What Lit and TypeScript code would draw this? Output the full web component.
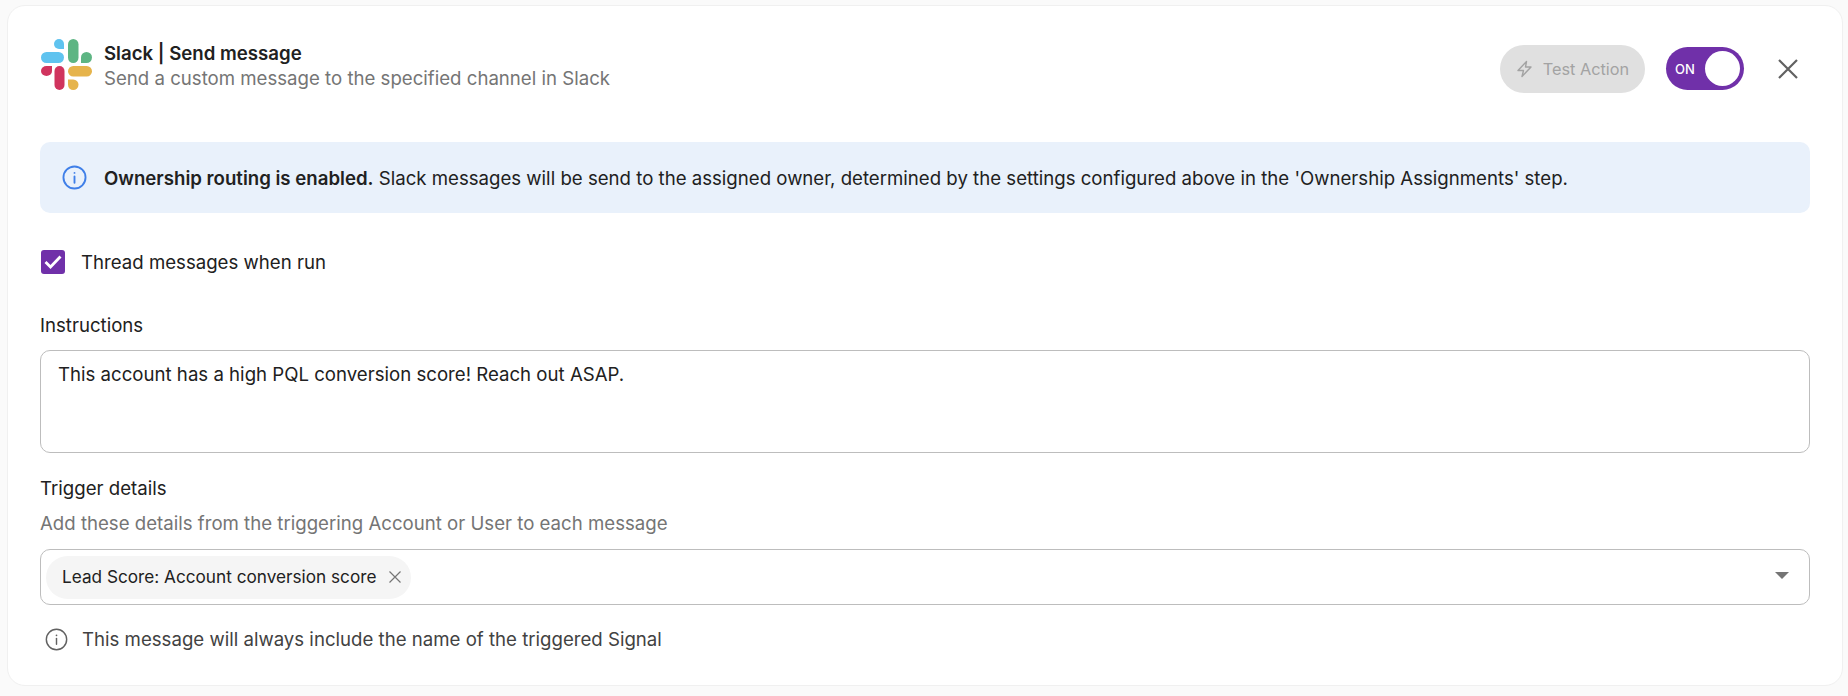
import { LitElement, html, css } from "lit";
import { customElement } from "lit/decorators.js";

@customElement("app-root")
export class AppRoot extends LitElement {
  static styles = css`
    :host { display: block; height: 696px; background: #fafafa; padding: 5px 5px 10px 7px; box-sizing: border-box; font-family: Inter, "Liberation Sans", sans-serif; font-size: 18.64px; line-height: 24px; color: #212121; }
    .card { height: 681px; box-sizing: border-box; background: #fff; border: 1px solid #f0f0f0; border-radius: 18px; padding: 33px 32px 0 32px; display: flex; flex-direction: column; }
    .head { display: flex; align-items: flex-start; height: 60px; }
    .logo { width: 51px; height: 51px; margin-left: 1px; flex: none; }
    .titles { margin-left: 12px; flex: 1; padding-top: 2px; }
    .title { font-weight: 600; line-height: 25px; color: #212121; }
    .sub { color: #757575; line-height: 25px; }
    .btn { margin-top: 6px; width: 145px; height: 48px; border-radius: 24px; background: #e0e0e0; color: #a3a3a3; display: flex; align-items: center; justify-content: center; gap: 10px; font-size: 16.3px; font-weight: 400; }
    .toggle { margin-top: 8px; width: 78px; height: 43px; margin-left: 21px; border-radius: 22px; background: #7030a9; color: #fff; display: flex; align-items: center; justify-content: space-between; box-sizing: border-box; padding: 0 4px 0 9px; font-size: 13px; font-weight: 500; }
    .knob { width: 35px; height: 35px; border-radius: 50%; background: #fff; }
    .close { margin-top: 10px; margin-left: 24px; margin-right: 2px; width: 40px; height: 40px; display: flex; align-items: center; justify-content: center; }
    .alert { margin-top: 43px; height: 71px; background: #e9f1fb; border-radius: 10px; display: flex; align-items: center; padding: 0 22px; color: #212121; }
    .alert b { font-weight: 600; }
    .alert svg { margin-right: 17px; flex: none; }
    .check { margin-top: 37px; height: 24px; display: flex; align-items: center; margin-left: 1px; gap: 16px; }
    .box { width: 24px; height: 24px; border-radius: 3px; background: #7030a9; display: flex; align-items: center; justify-content: center; }
    .label { margin-top: 39px; height: 24px; }
    .textarea { margin-top: 13px; height: 103px; box-sizing: border-box; border: 1px solid #bdbdbd; border-radius: 10px; padding: 11px 17px; }
    .label2 { margin-top: 23px; height: 24px; }
    .hint { margin-top: 11px; color: #757575; }
    .select { margin-top: 14px; height: 56px; box-sizing: border-box; border: 1px solid #bdbdbd; border-radius: 10px; display: flex; align-items: center; justify-content: space-between; padding: 0 20px 0 5px; }
    .chip { height: 43px; border-radius: 22px; background: #f5f5f5; display: flex; align-items: center; padding: 0 9px 0 16px; gap: 12px; font-size: 17.2px; }
    .caret { width: 0; height: 0; border-left: 7px solid transparent; border-right: 7px solid transparent; border-top: 7px solid #757575; margin-top: -3px; }
    .note { margin-top: 22px; display: flex; align-items: center; gap: 14px; margin-left: 5px; color: #424242; }
  `;

  private info(color: string, size: number, sw: number) {
    return html`<svg width=${size} height=${size} viewBox="0 0 24 24" fill="none" stroke=${color} stroke-width=${sw}>
      <circle cx="12" cy="12" r="10.6"></circle>
      <path d="M12 11v6" stroke-linecap="round"></path>
      <circle cx="12" cy="7.6" r="0.9" fill=${color} stroke="none"></circle>
    </svg>`;
  }

  render() {
    return html`
      <div class="card">
        <div class="head">
          <svg class="logo" viewBox="0 0 51 51">
            <g fill="#5fc3ef">
              <path d="M18 0a5 5 0 0 0 0 10h5V5a5 5 0 0 0-5-5z"></path>
              <rect x="0" y="13" width="23" height="11" rx="5.5"></rect>
            </g>
            <g fill="#5db583">
              <rect x="27" y="0" width="10.500" height="24" rx="5.25"></rect>
              <path d="M40 24v-5.500a5.500 5.500 0 1 1 5.500 5.500z"></path>
            </g>
            <g fill="#e6b44c">
              <rect x="27" y="27" width="24" height="10.500" rx="5.25"></rect>
              <path d="M27 40.500h5.250a5.250 5.250 0 1 1 -5.250 5.250z"></path>
            </g>
            <g fill="#d0345e">
              <rect x="13.500" y="27" width="10" height="24" rx="5"></rect>
              <path d="M11 27v5a5.500 5 0 1 1 -5.500 -5z"></path>
            </g>
          </svg>
          <div class="titles">
            <div class="title">Slack | Send message</div>
            <div class="sub">Send a custom message to the specified channel in Slack</div>
          </div>
          <div class="btn">
            <svg width="17" height="18" viewBox="0 0 17 18" fill="none" stroke="#a3a3a3" stroke-width="1.4" stroke-linejoin="round"><path d="M10.500 1.500 2 10.500h5.500L6 16.500l9-9.500H9.500z"></path></svg>
            <span>Test Action</span>
          </div>
          <div class="toggle"><span>ON</span><div class="knob"></div></div>
          <div class="close">
            <svg width="20" height="20" viewBox="0 0 20 20" stroke="#616161" stroke-width="2.2" fill="none"><path d="M1 1l18 18M19 1 1 19"></path></svg>
          </div>
        </div>

        <div class="alert">
          ${this.info("#3f7fe8", 25, 1.8)}
          <span><b>Ownership routing is enabled.</b> Slack messages will be send to the assigned owner, determined by the settings configured above in the 'Ownership Assignments' step.</span>
        </div>

        <div class="check">
          <div class="box">
            <svg width="18" height="14" viewBox="0 0 18 14" fill="none" stroke="#fff" stroke-width="2.8"><path d="M1.500 7l5 5L16.500 1.500"></path></svg>
          </div>
          <span>Thread messages when run</span>
        </div>

        <div class="label">Instructions</div>
        <div class="textarea">This account has a high PQL conversion score! Reach out ASAP.</div>

        <div class="label2">Trigger details</div>
        <div class="hint">Add these details from the triggering Account or User to each message</div>
        <div class="select">
          <div class="chip">
            <span>Lead Score: Account conversion score</span>
            <svg width="14" height="14" viewBox="0 0 14 14" stroke="#757575" stroke-width="1.2" fill="none"><path d="M1.500 1.500l11 11M12.500 1.500l-11 11"></path></svg>
          </div>
          <div class="caret"></div>
        </div>

        <div class="note">
          ${this.info("#616161", 23, 1.5)}
          <span>This message will always include the name of the triggered Signal</span>
        </div>
      </div>
    `;
  }
}
